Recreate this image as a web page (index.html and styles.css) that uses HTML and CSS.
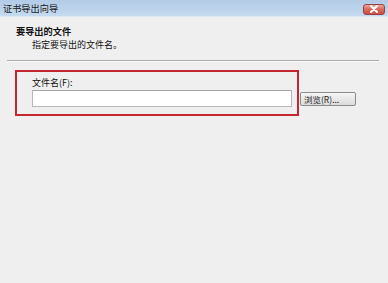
FILE: index.html
```html
<!DOCTYPE html>
<html lang="zh-CN">
<head>
<meta charset="utf-8">
<title>证书导出向导</title>
<link rel="stylesheet" href="styles.css">
</head>
<body>
<div class="window">
  <div class="titlebar">
    <span class="title">证书导出向导</span>
    <span class="close"><svg width="10" height="8" viewBox="0 0 10 8"><path d="M2 1 L8 7 M8 1 L2 7" stroke="#fff" stroke-width="2" stroke-linecap="round"/></svg></span>
  </div>
  <div class="header">
    <div class="h-title">要导出的文件</div>
    <div class="h-sub">指定要导出的文件名。</div>
  </div>
  <div class="sep"></div>
  <div class="content">
    <div class="field">
      <div class="label">文件名(F):</div>
      <div class="row">
        <div class="input"></div>
        <div class="btn">浏览(R)...</div>
      </div>
    </div>
    <div class="highlight"></div>
  </div>
</div>
</body>
</html>
```
FILE: styles.css
```css
* { box-sizing: border-box; }
html, body {
  margin: 0;
  padding: 0;
  background: #efefef;
}
body {
  font-family: "Noto Sans CJK SC", "Noto Sans", sans-serif;
  font-size: 9px;
  color: #111;
}
.window {
  width: 388px;
  height: 283px;
  background: #efefef;
  overflow: hidden;
}
.titlebar {
  height: 17px;
  display: flex;
  align-items: center;
  justify-content: space-between;
  padding: 0 3px 0 3px;
  background: linear-gradient(to bottom, #b3cbe6 0%, #bcd3ec 60%, #c6dbf0 100%);
  border-bottom: 1px solid #dfeaf6;
}
.title {
  font-size: 9.2px;
  line-height: 16px;
  color: #1a1a1a;
}
.close {
  width: 22px;
  height: 11px;
  margin-top: 2px;
  border-radius: 3px;
  border: 1px solid #9a4040;
  background: linear-gradient(to bottom, #eeaa98 0%, #dc6a5c 45%, #cc4d42 100%);
  display: flex;
  align-items: center;
  justify-content: center;
}
.header {
  padding: 8px 0 9px 16px;
}
.h-title {
  font-weight: bold;
  font-size: 9.2px;
  line-height: 13px;
}
.h-sub {
  line-height: 13px;
  padding-left: 16px;
}
.sep {
  margin: 0 9px 0 7px;
  border-top: 1px solid #a9a9a9;
  border-bottom: 1px solid #fbfbfb;
}
.content {
  position: relative;
  padding: 14px 0 0 32px;
  height: 221px;
}
.label {
  line-height: 13px;
}
.row {
  display: flex;
  align-items: center;
  margin-top: 1px;
}
.input {
  width: 260px;
  height: 17px;
  background: #fff;
  border: 1px solid #b5b8bd;
  border-top-color: #a3a6ab;
}
.btn {
  margin-left: 8px;
  width: 56px;
  height: 14px;
  border: 1px solid #8a8a8a;
  border-radius: 2px;
  background: linear-gradient(to bottom, #f6f6f6 0%, #e8e8e8 50%, #dcdcdc 100%);
  font-size: 8.5px;
  line-height: 12px;
  padding-left: 3px;
  color: #222;
}
.highlight {
  position: absolute;
  left: 15px;
  top: 8px;
  width: 284px;
  height: 46px;
  border: 2px solid #c42530;
}
```
